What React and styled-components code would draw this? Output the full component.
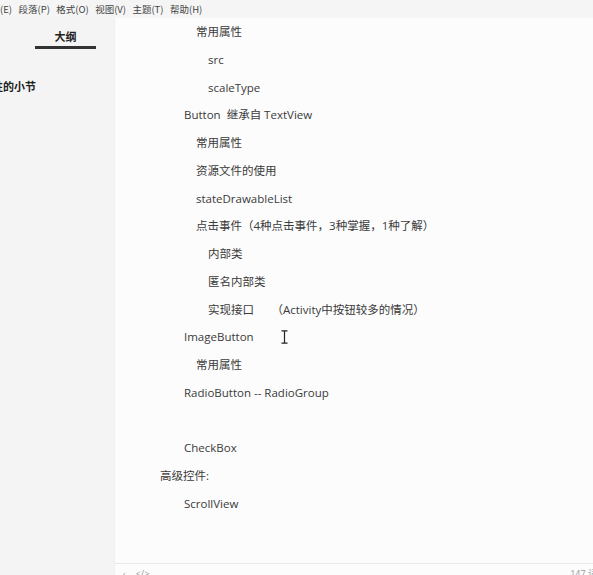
import React from 'react';
import styled, { createGlobalStyle } from 'styled-components';

const GlobalStyle = createGlobalStyle`
  html, body {
    margin: 0;
    padding: 0;
    height: 100%;
    overflow: hidden;
    background: #fcfcfc;
  }
  #root {
    height: 100%;
  }
`;

const Window = styled.div`
  width: 593px;
  height: 575px;
  display: flex;
  flex-direction: column;
  overflow: hidden;
  font-family: "Open Sans", "Noto Sans CJK SC", sans-serif;
  color: #333;
`;

const MenuBar = styled.div`
  height: 18px;
  flex: none;
  display: flex;
  align-items: center;
  gap: 6.4px;
  background: #f5f5f5;
  font-family: "Noto Sans CJK SC", "Noto Sans", sans-serif;
  font-size: 9.5px;
  color: #444;
  white-space: nowrap;
  overflow: hidden;
`;

const MenuItem = styled.span`
  margin-left: ${p => p.$shift || 0}px;
`;

const Body = styled.div`
  flex: 1;
  display: flex;
  min-height: 0;
`;

const Sidebar = styled.aside`
  width: 114px;
  flex: none;
  background: #f4f4f4;
  overflow: hidden;
`;

const TabRow = styled.div`
  display: flex;
  padding: 8px 0 0 35px;
`;

const Tab = styled.div`
  width: 61px;
  text-align: center;
  font-family: "Noto Sans CJK SC", sans-serif;
  font-weight: 700;
  font-size: 11px;
  line-height: 20px;
  color: #222;
  border-bottom: 3px solid #333;
`;

const OutlineItem = styled.div`
  margin: 29px 0 0 -30px;
  font-family: "Noto Sans CJK SC", sans-serif;
  font-weight: 700;
  font-size: 11px;
  line-height: 16px;
  color: #222;
  white-space: nowrap;
`;

const Editor = styled.main`
  flex: 1;
  display: flex;
  flex-direction: column;
  background: #fcfcfc;
  border-left: 1px solid #efefef;
  min-width: 0;
`;

const Content = styled.div`
  flex: 1;
  overflow: hidden;
`;

const Line = styled.div`
  height: 27.76px;
  line-height: 27.76px;
  padding-left: ${p => p.$indent}px;
  font-size: 11.5px;
  color: #3a3a3a;
  white-space: pre;
`;

const Cursor = styled.span`
  display: inline-block;
  position: relative;
  top: -1px;
  vertical-align: middle;
  margin-left: 27px;
  width: 7px;
  height: 14px;
  line-height: 0;
`;

const StatusBar = styled.footer`
  height: 11px;
  flex: none;
  display: flex;
  align-items: flex-start;
  gap: 10px;
  padding: 0 0 0 8px;
  border-top: 1px solid #e9e9e9;
  font-size: 9px;
  color: #999;
  overflow: hidden;
`;

const StatusIcon = styled.span`
  line-height: 20px;
`;

const WordCount = styled.span`
  margin-left: auto;
  line-height: 20px;
  white-space: nowrap;
  margin-right: -4px;
`;

const IBeam = () => (
  <svg width="7" height="14" viewBox="0 0 7 14">
    <path d="M0.5 0.8h6M3.5 0.8v12.4M0.5 13.2h6" stroke="#222" strokeWidth="1.2" fill="none" />
  </svg>
);

const lines = [
  { indent: 81, text: '常用属性' },
  { indent: 93, text: 'src' },
  { indent: 93, text: 'scaleType' },
  { indent: 69, text: 'Button  继承自 TextView' },
  { indent: 81, text: '常用属性' },
  { indent: 81, text: '资源文件的使用' },
  { indent: 81, text: 'stateDrawableList' },
  { indent: 81, text: '点击事件（4种点击事件，3种掌握，1种了解）' },
  { indent: 93, text: '内部类' },
  { indent: 93, text: '匿名内部类' },
  { indent: 93, text: '实现接口　  （Activity中按钮较多的情况）' },
  { indent: 69, text: 'ImageButton', cursor: true },
  { indent: 81, text: '常用属性' },
  { indent: 69, text: 'RadioButton -- RadioGroup' },
  { indent: 69, text: '' },
  { indent: 69, text: 'CheckBox' },
  { indent: 45, text: '高级控件:' },
  { indent: 69, text: 'ScrollView' },
];

const menus = ['编辑(E)', '段落(P)', '格式(O)', '视图(V)', '主题(T)', '帮助(H)'];

export default function App() {
  return (
    <Window>
      <GlobalStyle />
      <MenuBar>
        {menus.map((m, i) => (
          <MenuItem key={m} $shift={i === 0 ? -19 : 0}>{m}</MenuItem>
        ))}
      </MenuBar>
      <Body>
        <Sidebar>
          <TabRow>
            <Tab>大纲</Tab>
          </TabRow>
          <OutlineItem>重要性的小节</OutlineItem>
        </Sidebar>
        <Editor>
          <Content>
            {lines.map((l, i) => (
              <Line key={i} $indent={l.indent}>
                {l.text || '\u00a0'}
                {l.cursor && (
                  <Cursor>
                    <IBeam />
                  </Cursor>
                )}
              </Line>
            ))}
          </Content>
          <StatusBar>
            <StatusIcon>‹</StatusIcon>
            <StatusIcon>&lt;/&gt;</StatusIcon>
            <WordCount>147 词</WordCount>
          </StatusBar>
        </Editor>
      </Body>
    </Window>
  );
}
